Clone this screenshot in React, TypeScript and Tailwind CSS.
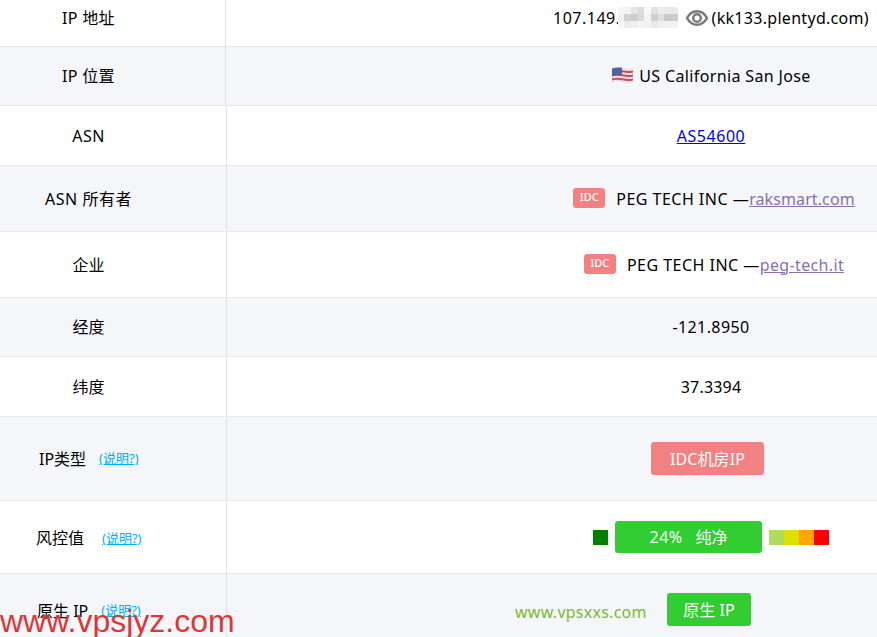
import type { ReactNode } from 'react';

const FONT = "font-['Noto_Sans','Noto_Sans_CJK_SC',sans-serif]";

function Help() {
  return (
    <a href="#" className="text-[13px] leading-none text-[#00aeff] underline">
      (说明?)
    </a>
  );
}

function Row({
  label,
  alt,
  className,
  labelClass = 'w-[177px] justify-center',
  colClass = 'w-[227px]',
  contentClass = 'w-[968px]',
  children,
}: {
  label: ReactNode;
  alt?: boolean;
  className: string;
  labelClass?: string;
  colClass?: string;
  contentClass?: string;
  children: ReactNode;
}) {
  return (
    <div className={`flex border-b border-[#e8e8e8] ${alt ? 'bg-[#f5f6fa]' : 'bg-white'} ${className}`}>
      <div className={`flex shrink-0 items-center border-r border-[#e3e3e3] ${colClass}`}>
        <div className={`flex ${labelClass}`}>{label}</div>
      </div>
      <div className={`flex shrink-0 items-center justify-center ${contentClass}`}>{children}</div>
    </div>
  );
}

function IdcTag() {
  return (
    <span className="mt-[-2px] flex h-[20px] w-[32px] items-center justify-center rounded-[3px] bg-[#f38181] text-[11px] font-medium text-white">
      IDC
    </span>
  );
}

function Flag() {
  return (
    <svg width="21" height="17" viewBox="0 0 21 17" className="mr-[6px] mt-[-2px]">
      <path d="M0 1.5C4 0 8 0 11 1s7 1.5 10 .5V15.5c-3 1-7 .8-10-.2s-7-1-11 .5Z" fill="#f0dfe2" />
      <path d="M0 3.4c7-2 14 2 21 0v2c-7 2-14-2-21 0Zm0 4c7-2 14 2 21 0v2c-7 2-14-2-21 0Zm0 4c7-2 14 2 21 0v2c-7 2-14-2-21 0Z" fill="#c4505f" />
      <path d="M0 1.5C3 .4 7 .3 10 .8V8.6C7 8 3 8 0 9Z" fill="#56609a" />
    </svg>
  );
}

function EyeIcon() {
  return (
    <svg width="24" height="18" viewBox="0 0 24 18" fill="none" stroke="#7a7a7a" className="mr-[3px]">
      <path d="M2 9C4.500 4.500 8 2.200 12 2.200S19.500 4.500 22 9c-2.500 4.500-6 6.800-10 6.800S4.500 13.500 2 9Z" strokeWidth="2.500" />
      <circle cx="12" cy="9" r="3.800" strokeWidth="2.500" />
    </svg>
  );
}

const BLUR = [
  ['#f3f5f9', '#f1f3f6', '#e6e6e6', '#dcdcdc', '#f7f7f7', '#e2e2e2', '#ececec', '#e9e9e9', '#e9e9e9'],
  ['#eef1f5', '#cfd3d8', '#cdcdcd', '#dadada', '#f4f4f4', '#cfcfcf', '#e0e0e0', '#c9c9c9', '#cccccc'],
  ['#f6f6f6', '#ececec', '#f0f0f0', '#f4f4f4', '#f2f2f2', '#e9e9e9', '#efefef', '#f1f1f1', '#f1f1f1'],
];

function BlurredIp() {
  return (
    <span className="ml-[-3px] mr-[7px] flex h-[21px] w-[60px] flex-col overflow-hidden rounded-[3px]">
      {BLUR.map((row, r) => (
        <span key={r} className="flex flex-1">
          {row.map((c, i) => (
            <span key={i} className="h-full flex-1" style={{ backgroundColor: c }} />
          ))}
        </span>
      ))}
    </span>
  );
}

export default function App() {
  return (
    <div className={`relative h-[637px] w-[877px] overflow-hidden bg-white text-[16px] text-black ${FONT}`}>
      <div className="w-[1197px]">
        <Row
          label={<span className="mb-[11px] tracking-[0.3px]">IP 地址</span>}
          colClass="w-[226px]"
          contentClass="w-[970px]"
          className="h-[47px]"
        >
          <div className="mb-[11px] flex items-center">
            <span className="tracking-[0.5px]">107.149.</span>
            <BlurredIp />
            <EyeIcon />
            <span className="tracking-[0.3px]">(kk133.plentyd.com)</span>
          </div>
        </Row>
        <Row
          label={<span className="tracking-[0.3px]">IP 位置</span>}
          colClass="w-[226px]"
          contentClass="w-[970px]"
          alt
          className="h-[59px]"
        >
          <div className="ml-[1px] flex items-center">
            <Flag />
            <span className="tracking-[0.36px]">US California San Jose</span>
          </div>
        </Row>
        <Row label={<span className="tracking-[0.5px]">ASN</span>} className="h-[60px]">
          <a href="#" className="tracking-[0.55px] text-[#0000ee] underline">AS54600</a>
        </Row>
        <Row label={<span className="tracking-[0.5px]">ASN 所有者</span>} alt className="h-[66px]">
          <div className="ml-[6px] flex items-center">
            <IdcTag />
            <span className="ml-[11px] tracking-[0.48px]">PEG TECH INC —</span>
            <a href="#" className="tracking-[0.1px] text-[#8a70b0] underline">raksmart.com</a>
          </div>
        </Row>
        <Row label="企业" className="h-[66px]">
          <div className="ml-[6px] flex items-center">
            <IdcTag />
            <span className="ml-[11px] tracking-[0.48px]">PEG TECH INC —</span>
            <a href="#" className="tracking-[0.35px] text-[#8a70b0] underline">peg-tech.it</a>
          </div>
        </Row>
        <Row label="经度" alt className="h-[59px]">
          <span className="tracking-[0.4px]">-121.8950</span>
        </Row>
        <Row label="纬度" className="h-[60px]">
          <span className="tracking-[0.2px]">37.3394</span>
        </Row>
        <Row
          label={
            <>
              <span>IP类型</span>
              <span className="ml-[13px] flex items-center"><Help /></span>
            </>
          }
          labelClass="pl-[39px] items-center"
          alt
          className="h-[84px]"
        >
          <span className="mr-[7px] flex h-[33px] w-[113px] items-center justify-center rounded-[3px] bg-[#f38181] tracking-[0.1px] text-white">
            IDC机房IP
          </span>
        </Row>
        <Row
          label={
            <>
              <span className="mt-[1px]">风控值</span>
              <span className="ml-[18px] mt-[3px] flex items-center"><Help /></span>
            </>
          }
          labelClass="pl-[36px] items-center"
          className="h-[73px]"
        >
          <div className="flex items-center">
            <span className="h-[15px] w-[15px] bg-[#008000]" />
            <span className="mx-[7px] flex h-[32px] w-[147px] items-center justify-center gap-[13px] rounded-[3px] bg-[#32cd32] text-white">
              <span className="tracking-[0.4px]">24%</span>
              <span>纯净</span>
            </span>
            <span className="h-[15px] w-[15px] bg-[#b0dc5e]" />
            <span className="h-[15px] w-[15px] bg-[#dfdf00]" />
            <span className="h-[15px] w-[15px] bg-[#ffa500]" />
            <span className="h-[15px] w-[15px] bg-[#ff0000]" />
          </div>
        </Row>
        <Row
          label={
            <>
              <span>原生 IP</span>
              <span className="ml-[13px] flex items-center"><Help /></span>
            </>
          }
          labelClass="pl-[37px] items-center"
          alt
          className="h-[74px]"
        >
          <span className="ml-[-4px] mt-[-2px] flex h-[33px] w-[84px] items-center justify-center rounded-[3px] bg-[#32cd32] text-white">
            原生 IP
          </span>
        </Row>
      </div>
      {/* watermarks sit over the table */}
      <span className="absolute left-[515px] top-[600px] text-[16px] tracking-[0.25px] text-[#7ab92f]">www.vpsxxs.com</span>
      <span className="absolute left-0 top-[603px] font-['Liberation_Sans',sans-serif] text-[32px] leading-[36px] text-[#e03535]">
        www.vpsjyz.com
      </span>
    </div>
  );
}
